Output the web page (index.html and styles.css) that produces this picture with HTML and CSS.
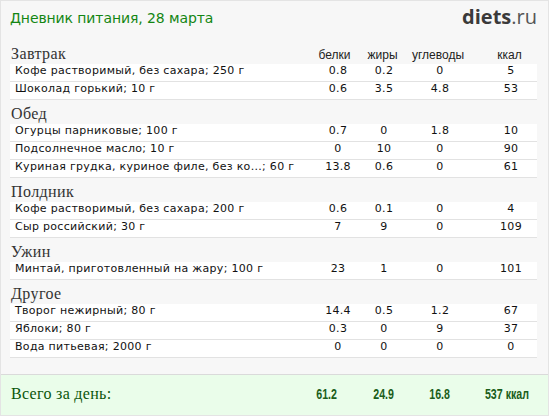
FILE: index.html
```html
<!DOCTYPE html>
<html lang="ru">
<head>
<meta charset="utf-8">
<title>Дневник питания</title>
<link rel="stylesheet" href="styles.css">
</head>
<body>
<div class="page">
  <header class="top">
    <h1 class="title">Дневник питания, 28 марта</h1>
    <div class="logo"><b>diets</b>.ru</div>
  </header>
  <div class="meals">
    <section class="meal">
      <div class="meal-head">
        <span class="meal-name">Завтрак</span>
        <span class="lbl c1">белки</span>
        <span class="lbl c2">жиры</span>
        <span class="lbl c3">углеводы</span>
        <span class="lbl c4">ккал</span>
      </div>
      <div class="row"><span class="name">Кофе растворимый, без сахара; 250 г</span><span class="c c1">0.8</span><span class="c c2">0.2</span><span class="c c3">0</span><span class="c c4">5</span></div>
      <div class="row"><span class="name">Шоколад горький; 10 г</span><span class="c c1">0.6</span><span class="c c2">3.5</span><span class="c c3">4.8</span><span class="c c4">53</span></div>
    </section>
    <section class="meal">
      <div class="meal-head"><span class="meal-name">Обед</span></div>
      <div class="row"><span class="name">Огурцы парниковые; 100 г</span><span class="c c1">0.7</span><span class="c c2">0</span><span class="c c3">1.8</span><span class="c c4">10</span></div>
      <div class="row"><span class="name">Подсолнечное масло; 10 г</span><span class="c c1">0</span><span class="c c2">10</span><span class="c c3">0</span><span class="c c4">90</span></div>
      <div class="row"><span class="name">Куриная грудка, куриное филе, без ко...; 60 г</span><span class="c c1">13.8</span><span class="c c2">0.6</span><span class="c c3">0</span><span class="c c4">61</span></div>
    </section>
    <section class="meal">
      <div class="meal-head"><span class="meal-name">Полдник</span></div>
      <div class="row"><span class="name">Кофе растворимый, без сахара; 200 г</span><span class="c c1">0.6</span><span class="c c2">0.1</span><span class="c c3">0</span><span class="c c4">4</span></div>
      <div class="row"><span class="name">Сыр российский; 30 г</span><span class="c c1">7</span><span class="c c2">9</span><span class="c c3">0</span><span class="c c4">109</span></div>
    </section>
    <section class="meal">
      <div class="meal-head"><span class="meal-name">Ужин</span></div>
      <div class="row"><span class="name">Минтай, приготовленный на жару; 100 г</span><span class="c c1">23</span><span class="c c2">1</span><span class="c c3">0</span><span class="c c4">101</span></div>
    </section>
    <section class="meal">
      <div class="meal-head"><span class="meal-name">Другое</span></div>
      <div class="row"><span class="name">Творог нежирный; 80 г</span><span class="c c1">14.4</span><span class="c c2">0.5</span><span class="c c3">1.2</span><span class="c c4">67</span></div>
      <div class="row"><span class="name">Яблоки; 80 г</span><span class="c c1">0.3</span><span class="c c2">0</span><span class="c c3">9</span><span class="c c4">37</span></div>
      <div class="row"><span class="name">Вода питьевая; 2000 г</span><span class="c c1">0</span><span class="c c2">0</span><span class="c c3">0</span><span class="c c4">0</span></div>
    </section>
  </div>
  <div class="total">
    <span class="total-name">Всего за день:</span>
    <span class="t t1"><span class="tn">61.2</span></span>
    <span class="t t2"><span class="tn">24.9</span></span>
    <span class="t t3"><span class="tn">16.8</span></span>
    <span class="t t4"><span class="tn">537 ккал</span></span>
  </div>
</div>
</body>
</html>
```

FILE: styles.css
```css
html, body {
  margin: 0;
  padding: 0;
  background: #ffffff;
}

.page {
  width: 547px;
  height: 414px;
  border: 1px solid #e4e4e4;
  background: #f7f7f7;
  display: flex;
  flex-direction: column;
}

.top {
  height: 39px;
  box-sizing: border-box;
  display: flex;
  justify-content: space-between;
  align-items: flex-start;
  padding: 0 11px 0 9px;
}

.title {
  margin: 0;
  padding-top: 9px;
  font: normal 14px/16px "DejaVu Sans", sans-serif;
  letter-spacing: -0.1px;
  color: #138613;
}

.logo {
  padding-top: 4px;
  font: 20px/24px "Open Sans", sans-serif;
  color: #555555;
}

.logo b {
  font-weight: 700;
  color: #3a3a3a;
}

.meals {
  padding: 0 11px 0 9px;
}

.meal-head {
  display: flex;
  align-items: baseline;
  height: 24px;
  box-sizing: border-box;
  padding-top: 5px;
}

.meal-name {
  flex: 1;
  padding-left: 1px;
  font: 16px/18px "Liberation Serif", serif;
  letter-spacing: 0.4px;
  color: #333333;
}

.lbl {
  flex: none;
  box-sizing: border-box;
  text-align: center;
  font: 12px/14px "Liberation Sans", sans-serif;
  color: #222222;
}

.lbl.c1 { padding-right: 7px; }
.lbl.c2 { padding-right: 3px; }
.lbl.c3 { padding-right: 5px; }
.lbl.c4 { padding-right: 3px; }

.row {
  display: flex;
  height: 18px;
  box-sizing: border-box;
  padding: 0 0 0 5px;
  background: #ffffff;
  border-bottom: 1px solid #e2e2e2;
  font: 11px/13px "DejaVu Sans", sans-serif;
  color: #111111;
}

.name {
  flex: 1;
  min-width: 0;
  white-space: nowrap;
  letter-spacing: 0.3px;
}

.c {
  flex: none;
  text-align: center;
  letter-spacing: 0.3px;
}

.c1 { width: 40px; }
.c2 { width: 40px; margin-left: 6px; }
.c3 { width: 56px; margin-left: 8px; }
.c4 { width: 52px; margin-left: 17px; }

.total {
  margin-top: auto;
  height: 41px;
  box-sizing: border-box;
  display: flex;
  align-items: baseline;
  padding: 10px 11px 0 10px;
  background: #eafdea;
  border-top: 1px solid #dadada;
}

.total-name {
  flex: 1;
  font: 16px/18px "Liberation Serif", serif;
  letter-spacing: 0.3px;
  color: #0b560b;
}

.t {
  flex: none;
  text-align: center;
  white-space: nowrap;
  font: bold 14px/18px "Liberation Sans", sans-serif;
  color: #1b5e1b;
}

.tn {
  display: inline-block;
  transform: scaleX(0.76);
  transform-origin: center;
}

.t1 { width: 40px; }
.t2 { width: 40px; margin-left: 17px; }
.t3 { width: 40px; margin-left: 16px; }
.t4 { width: 60px; margin-left: 17px; }
```
